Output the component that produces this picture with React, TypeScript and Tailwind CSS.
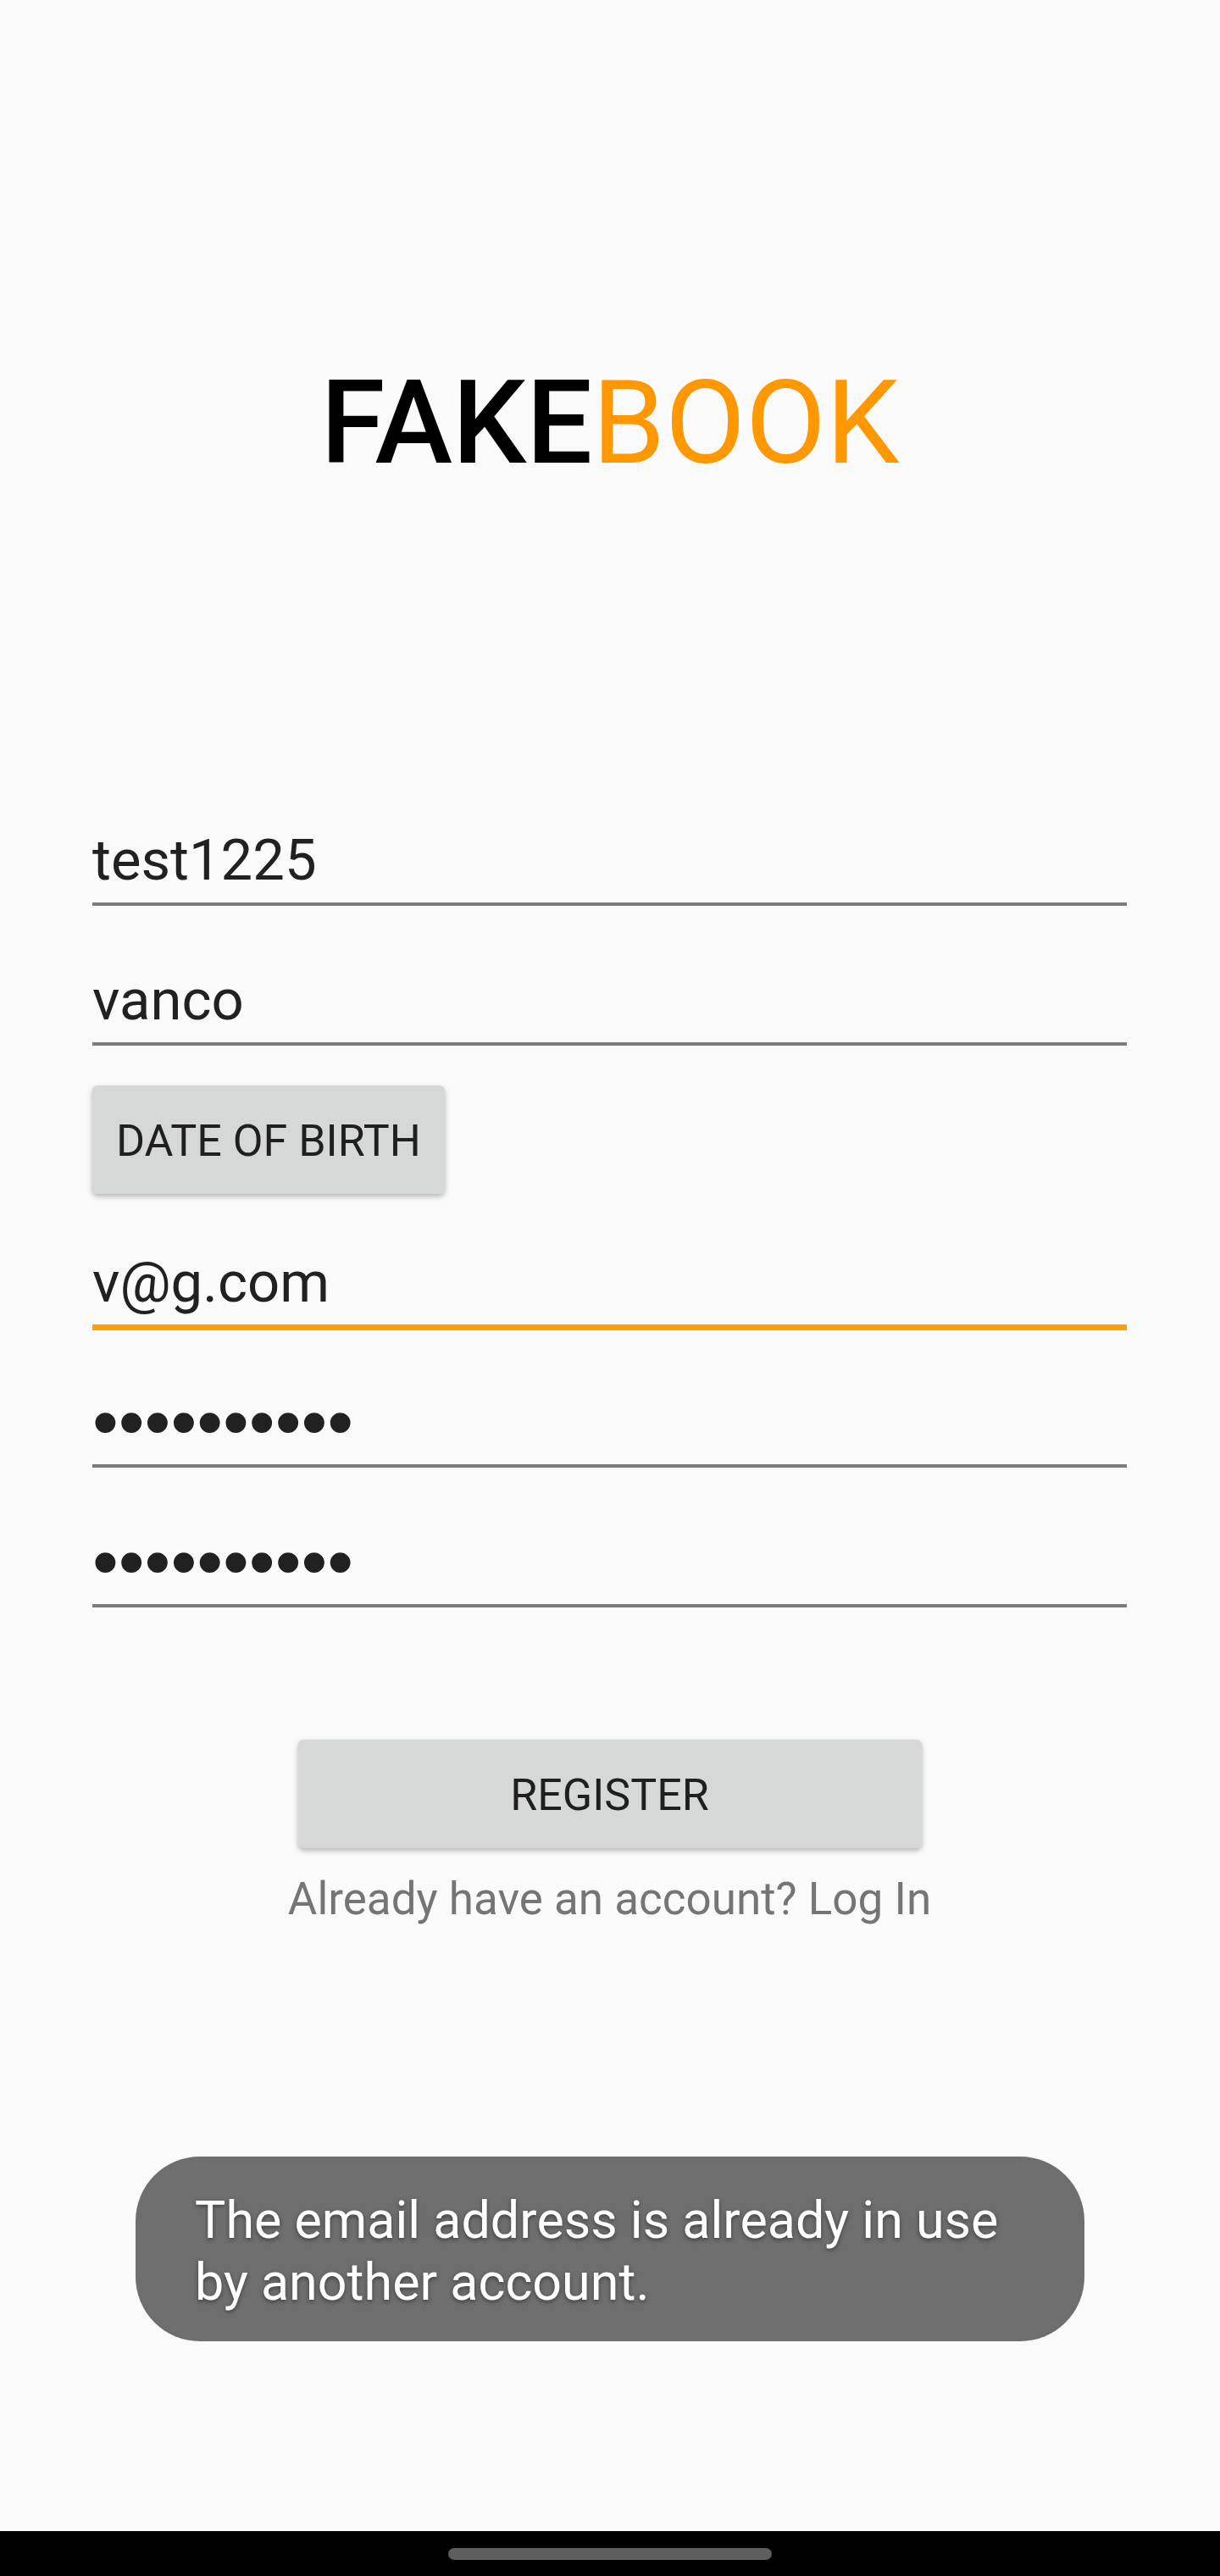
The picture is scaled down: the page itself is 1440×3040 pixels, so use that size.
import type { InputHTMLAttributes } from "react";

type FieldProps = InputHTMLAttributes<HTMLInputElement> & { label: string; active?: boolean };

function Field({ label, active = false, className = "", type = "text", ...rest }: FieldProps) {
  const line = active ? "border-b-[7px] border-[#ffa000]" : "border-b-4 border-[#7c7c7c]";
  const font = type === "password" ? "font-['Liberation_Sans',sans-serif] text-[88px]" : "text-[67px]";
  return (
    <label className={`block w-full ${className}`}>
      <span className="sr-only">{label}</span>
      <input
        type={type}
        className={`box-content block h-20 w-full bg-transparent pb-2.5 leading-[80px] text-[#212121] outline-none ${line} ${font}`}
        {...rest}
      />
    </label>
  );
}

const buttonStyle =
  "rounded-md bg-[#d6d8d7] pt-[34px] pb-[30px] text-[52px] leading-[64px] text-[#1f1f1f] shadow-[0_3px_6px_rgba(0,0,0,0.28)]";

export default function App() {
  return (
    <div className="flex min-h-screen flex-col bg-[#fafafa] font-['Roboto',sans-serif]">
      <main className="flex grow flex-col pt-[419px]">
        <h1 className="text-center text-[138px] leading-[160px] text-[#ff9800]">
          <span className="font-medium text-black">FAKE</span>BOOK
        </h1>

        <form className="mr-[110px] ml-[109px] mt-[396px] flex flex-col items-start" onSubmit={(e) => e.preventDefault()}>
          <Field label="First name" name="firstName" defaultValue="test1225" spellCheck={false} />
          <Field className="mt-[71px]" label="Last name" name="lastName" defaultValue="vanco" spellCheck={false} />
          <button type="button" className={`mt-[47px] px-7 ${buttonStyle}`}>
            DATE OF BIRTH
          </button>
          <Field className="mt-16" label="Email" name="email" type="email" defaultValue="v@g.com" active />
          <Field className="mt-[68px]" label="Password" name="password" type="password" defaultValue="abcdefghij" />
          <Field className="mt-[71px]" label="Confirm password" name="confirm" type="password" defaultValue="abcdefghij" />
          <button type="submit" className={`mt-[156px] w-[736px] max-w-full self-center ${buttonStyle}`}>
            REGISTER
          </button>
          <a href="#login" className="mt-7 self-center text-[53px] leading-[64px] text-[#757575]">
            Already have an account? Log In
          </a>
        </form>

        <div
          role="status"
          className="mx-40 mt-[272px] rounded-[76px] bg-[#6e6e6e] px-[70px] pt-[39px] pb-[33px] text-[61px] leading-[73px] text-white [text-shadow:0_2px_5px_rgba(0,0,0,0.45)]"
        >
          The email address is already in use by another account.
        </div>
      </main>

      <footer className="flex h-[53px] items-center justify-center bg-black">
        <div className="h-3.5 w-[382px] rounded-full bg-[#5e5e5e]" />
      </footer>
    </div>
  );
}
